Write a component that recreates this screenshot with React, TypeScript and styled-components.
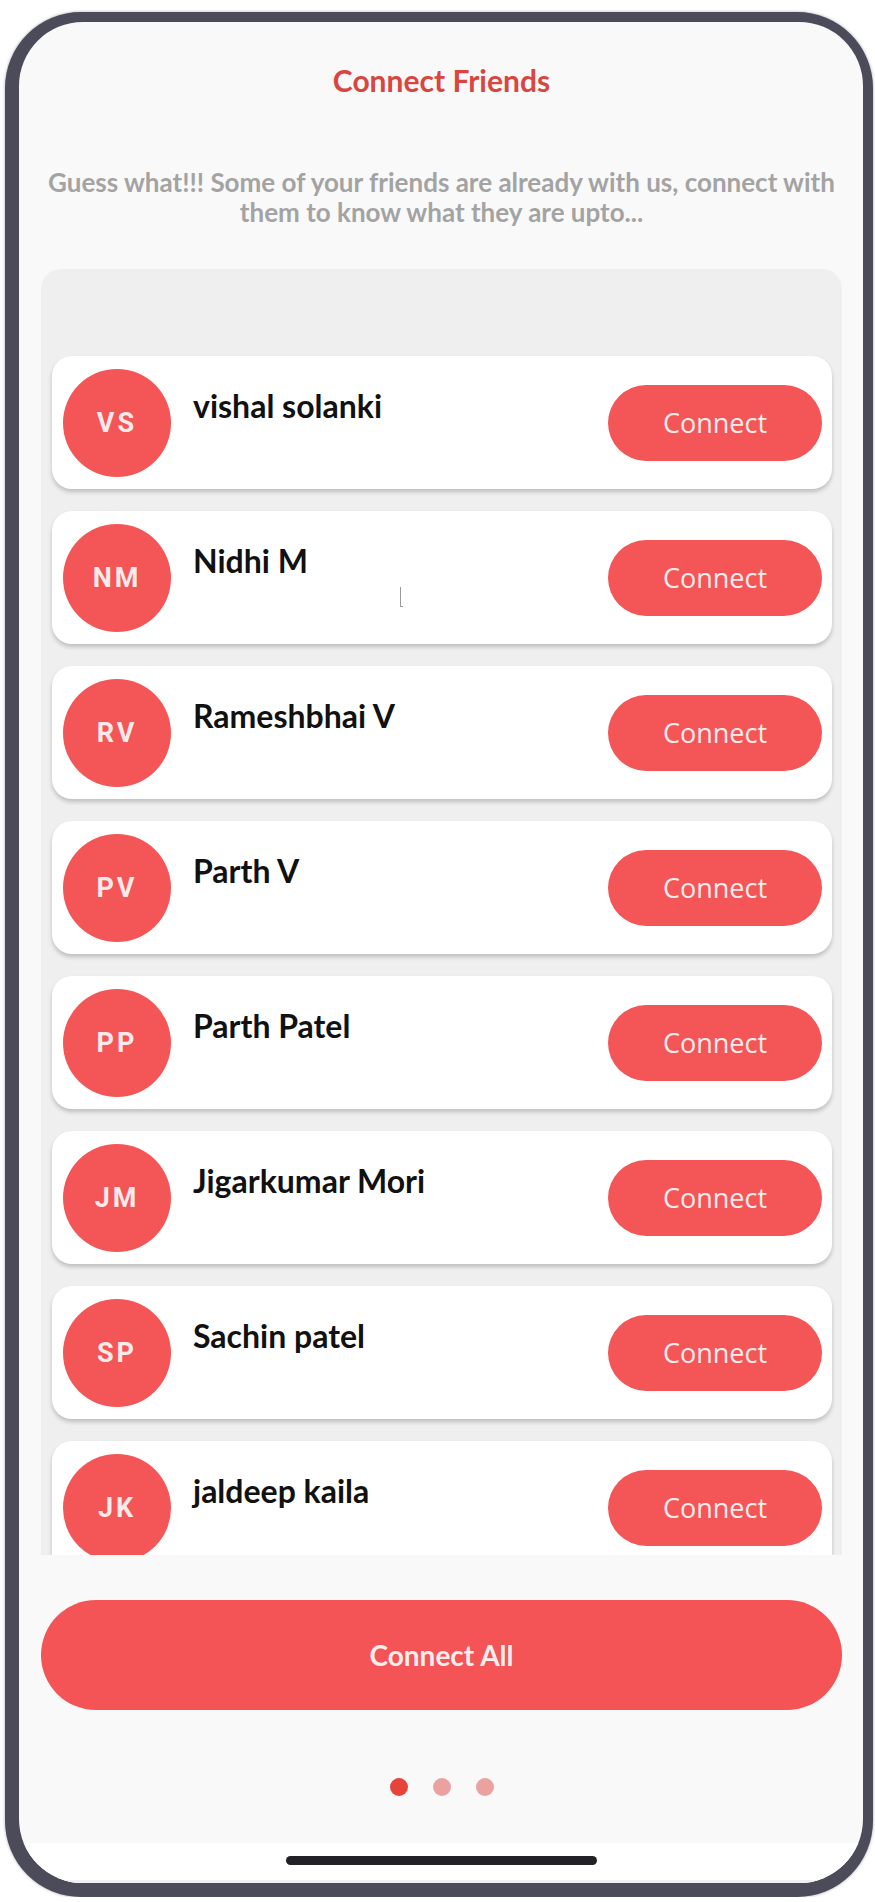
import React from "react";
import styled, { createGlobalStyle } from "styled-components";

const GlobalStyle = createGlobalStyle`
  html, body {
    margin: 0;
    padding: 0;
    background: #ffffff;
  }
  * {
    box-sizing: border-box;
  }
`;

const friends = [
  { initials: "VS", name: "vishal solanki" },
  { initials: "NM", name: "Nidhi M" },
  { initials: "RV", name: "Rameshbhai V" },
  { initials: "PV", name: "Parth V" },
  { initials: "PP", name: "Parth Patel" },
  { initials: "JM", name: "Jigarkumar Mori" },
  { initials: "SP", name: "Sachin patel" },
  { initials: "JK", name: "jaldeep kaila" },
];

const App = () => {
  return (
    <>
      <GlobalStyle />
      <Phone>
        <Screen>
          <Title>Connect Friends</Title>
          <Subtitle>
            Guess what!!! Some of your friends are already with us, connect with
            <br />
            them to know what they are upto...
          </Subtitle>
          <ListPanel>
            {friends.map((f, i) => (
              <FriendCard key={f.initials}>
                <Avatar>{f.initials}</Avatar>
                <Info>
                  <Name>{f.name}</Name>
                  {i === 1 && <Caret />}
                </Info>
                <ConnectButton>Connect</ConnectButton>
              </FriendCard>
            ))}
          </ListPanel>
          <ConnectAll>Connect All</ConnectAll>
          <Dots>
            <Dot $active />
            <Dot />
            <Dot />
          </Dots>
          <HomeStrip>
            <HomeBar />
          </HomeStrip>
        </Screen>
      </Phone>
    </>
  );
};

const Phone = styled.div`
  margin: 12px 0 0 5px;
  width: 868px;
  height: 1885px;
  border-style: solid;
  border-color: #4b4b5a;
  border-width: 10px 10px 14px 14px;
  border-radius: 76px;
  background: #4b4b5a;
  box-shadow: 0 0 3px rgba(75, 75, 90, 0.5);
`;

const Screen = styled.div`
  width: 100%;
  height: 100%;
  border-radius: 64px;
  background: #f9f9f9;
  overflow: hidden;
  display: flex;
  flex-direction: column;
  align-items: center;
  padding: 0 21px 0 22px;
`;

const Title = styled.h1`
  margin: 41px 0 0;
  font-family: "Lato", "Noto Sans", sans-serif;
  font-weight: 700;
  font-size: 30px;
  line-height: 34px;
  color: #d9463f;
`;

const Subtitle = styled.p`
  margin: 70px 0 0;
  font-family: "Lato", "Noto Sans", sans-serif;
  font-weight: 700;
  font-size: 26px;
  line-height: 30px;
  color: #a3a3a3;
  text-align: center;
  white-space: nowrap;
`;

const ListPanel = styled.div`
  margin-top: 42px;
  width: 100%;
  height: 1286px;
  flex-shrink: 0;
  background: #efefef;
  border-radius: 20px 20px 0 0;
  overflow: hidden;
  display: flex;
  flex-direction: column;
  gap: 22px;
  padding: 87px 10px 0 11px;
`;

const FriendCard = styled.div`
  flex-shrink: 0;
  height: 133px;
  background: #ffffff;
  border-radius: 20px;
  box-shadow: 0 3px 4px rgba(0, 0, 0, 0.2);
  display: flex;
  align-items: center;
  padding: 0 10px 0 11px;
`;

const Avatar = styled.div`
  width: 108px;
  height: 108px;
  border-radius: 50%;
  background: #f45556;
  color: #fbeaea;
  display: flex;
  align-items: center;
  justify-content: center;
  font-family: "Roboto", "Noto Sans", sans-serif;
  font-weight: 700;
  font-size: 27px;
  letter-spacing: 3px;
  flex-shrink: 0;
`;

const Info = styled.div`
  flex: 1;
  align-self: stretch;
  position: relative;
  padding: 33px 0 0 22px;
`;

const Name = styled.div`
  font-family: "Lato", "Noto Sans", sans-serif;
  font-weight: 700;
  font-size: 32px;
  line-height: 34px;
  color: #111111;
`;

const Caret = styled.span`
  position: absolute;
  left: 229px;
  top: 76px;
  width: 3px;
  height: 20px;
  border-left: 1px solid #9a9a9a;
  border-bottom: 1px solid #9a9a9a;
`;

const ConnectButton = styled.button`
  width: 214px;
  height: 76px;
  border: none;
  border-radius: 38px;
  background: #f45556;
  color: #fdecec;
  font-family: "Open Sans", "Noto Sans", sans-serif;
  font-size: 27px;
  font-weight: 400;
  flex-shrink: 0;
  padding: 0;
`;

const ConnectAll = styled.button`
  margin-top: 45px;
  width: 100%;
  height: 110px;
  flex-shrink: 0;
  border: none;
  border-radius: 55px;
  background: #f45455;
  color: #fdeeee;
  font-family: "Lato", "Noto Sans", sans-serif;
  font-weight: 700;
  font-size: 28px;
`;

const Dots = styled.div`
  margin-top: 68px;
  display: flex;
  gap: 25px;
`;

const Dot = styled.span<{ $active?: boolean }>`
  width: 18px;
  height: 18px;
  border-radius: 50%;
  background: ${(p) => (p.$active ? "#e8433a" : "#eca1a1")};
`;

const HomeStrip = styled.div`
  margin-top: 47px;
  align-self: stretch;
  margin-left: -22px;
  margin-right: -21px;
  flex: 1;
  background: #ffffff;
  border-bottom: 3px solid #f0f0f0;
  display: flex;
  justify-content: center;
  padding-top: 13px;
`;

const HomeBar = styled.div`
  width: 311px;
  height: 9px;
  border-radius: 5px;
  background: #222226;
`;

export default App;
